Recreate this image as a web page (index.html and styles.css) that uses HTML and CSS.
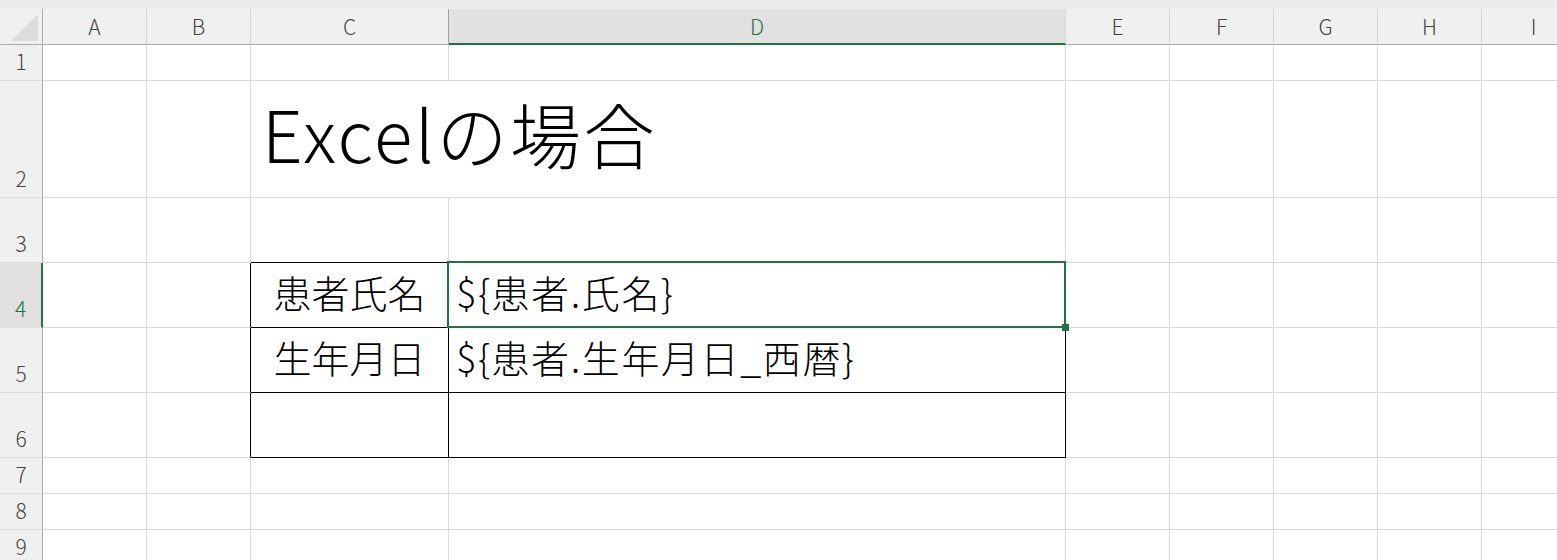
FILE: index.html
```html
<!DOCTYPE html>
<html lang="ja">
<head>
<meta charset="utf-8">
<title>Excelの場合</title>
<link rel="stylesheet" href="styles.css">
</head>
<body>
<div class="app">
  <div class="topstrip"></div>
  <div class="sheet">
    <!-- header row -->
    <div class="corner"><svg width="28" height="28" viewBox="0 0 28 28"><polygon points="27,0 27,27 0,27" fill="#dcdcdc"/></svg></div>
    <div class="ch">A</div>
    <div class="ch">B</div>
    <div class="ch before-sel">C</div>
    <div class="ch sel">D</div>
    <div class="ch">E</div>
    <div class="ch">F</div>
    <div class="ch">G</div>
    <div class="ch">H</div>
    <div class="ch">I</div>

    <!-- row 1 -->
    <div class="rh">1</div>
    <div class="c"></div><div class="c"></div><div class="c"></div><div class="c"></div>
    <div class="c"></div><div class="c"></div><div class="c"></div><div class="c"></div><div class="c"></div>

    <!-- row 2 -->
    <div class="rh">2</div>
    <div class="c"></div><div class="c"></div>
    <div class="c title overflow">Excelの場合</div>
    <div class="c"></div>
    <div class="c"></div><div class="c"></div><div class="c"></div><div class="c"></div><div class="c"></div>

    <!-- row 3 -->
    <div class="rh">3</div>
    <div class="c"></div><div class="c"></div>
    <div class="c bb"></div><div class="c bb"></div>
    <div class="c"></div><div class="c"></div><div class="c"></div><div class="c"></div><div class="c"></div>

    <!-- row 4 -->
    <div class="rh rsel">4</div>
    <div class="c"></div><div class="c br"></div>
    <div class="c tb center">患者氏名</div>
    <div class="c tb left active">${患者.氏名}<span class="handle"></span></div>
    <div class="c"></div><div class="c"></div><div class="c"></div><div class="c"></div><div class="c"></div>

    <!-- row 5 -->
    <div class="rh">5</div>
    <div class="c"></div><div class="c br"></div>
    <div class="c tb center">生年月日</div>
    <div class="c tb left">${患者.生年月日_西暦}</div>
    <div class="c"></div><div class="c"></div><div class="c"></div><div class="c"></div><div class="c"></div>

    <!-- row 6 -->
    <div class="rh">6</div>
    <div class="c"></div><div class="c br"></div>
    <div class="c tb"></div>
    <div class="c tb"></div>
    <div class="c"></div><div class="c"></div><div class="c"></div><div class="c"></div><div class="c"></div>

    <!-- row 7 -->
    <div class="rh">7</div>
    <div class="c"></div><div class="c"></div><div class="c"></div><div class="c"></div>
    <div class="c"></div><div class="c"></div><div class="c"></div><div class="c"></div><div class="c"></div>

    <!-- row 8 -->
    <div class="rh">8</div>
    <div class="c"></div><div class="c"></div><div class="c"></div><div class="c"></div>
    <div class="c"></div><div class="c"></div><div class="c"></div><div class="c"></div><div class="c"></div>

    <!-- row 9 -->
    <div class="rh">9</div>
    <div class="c"></div><div class="c"></div><div class="c"></div><div class="c"></div>
    <div class="c"></div><div class="c"></div><div class="c"></div><div class="c"></div><div class="c"></div>
  </div>
</div>
</body>
</html>
```
FILE: styles.css
```css
html, body {
  margin: 0;
  padding: 0;
  background: #ffffff;
  overflow: hidden;
}

.app {
  width: 1557px;
  height: 560px;
  overflow: hidden;
  font-family: "Noto Sans CJK JP", "Noto Sans", sans-serif;
}

.topstrip {
  height: 9px;
  background: #ebebeb;
}

.sheet {
  display: grid;
  grid-template-columns: 43px 104px 104px 198px 617px 104px 104px 104px 104px 104px;
  grid-template-rows: 36px 36px 117px 65px 65px 65px 65px 36px 36px 36px;
  width: 1586px;
}

.sheet > div {
  box-sizing: border-box;
  min-width: 0;
}

.corner {
  background: #f0f0f0;
  border-right: 1px solid #ababab;
  border-bottom: 1px solid #ababab;
  display: flex;
  align-items: flex-start;
  justify-content: flex-end;
  padding: 5px 3px 0 0;
}

.corner svg {
  display: block;
}

.ch {
  background: #f0f0f0;
  border-right: 1px solid #d6d6d6;
  border-bottom: 1px solid #ababab;
  color: #444444;
  font-size: 21px;
  font-weight: 300;
  display: flex;
  align-items: center;
  justify-content: center;
  line-height: 1;
}

.ch.before-sel {
  border-right-color: #9f9f9f;
}

.ch.sel {
  background: #e1e1e1;
  border-bottom: 2px solid #217346;
  color: #217346;
  padding-top: 1px;
}

.rh {
  background: #f0f0f0;
  border-right: 1px solid #ababab;
  border-bottom: 1px solid #dcdcdc;
  color: #444444;
  font-size: 21px;
  font-weight: 300;
  display: flex;
  align-items: flex-end;
  justify-content: center;
  line-height: 1;
  padding-bottom: 8px;
}

.rh.rsel {
  background: #e1e1e1;
  border-right: 2px solid #217346;
  color: #217346;
}

.c {
  border-right: 1px solid #dadada;
  border-bottom: 1px solid #dadada;
  color: #000000;
  white-space: nowrap;
}

.c.overflow {
  border-right-color: transparent;
  overflow: visible;
  position: relative;
  z-index: 1;
}

.title {
  font-size: 71px;
  font-weight: 300;
  letter-spacing: 2.6px;
  line-height: 1;
  display: flex;
  align-items: flex-end;
  padding: 0 0 29px 11px;
}

.c.bb {
  border-bottom-color: #000000;
}

.c.br {
  border-right-color: #000000;
}

.c.tb {
  border-right-color: #000000;
  border-bottom-color: #000000;
  font-size: 38px;
  font-weight: 300;
  line-height: 1;
  display: flex;
  align-items: center;
  padding-bottom: 7px;
}

.c.center {
  justify-content: center;
}

.c.left {
  justify-content: flex-start;
  padding-left: 7px;
  letter-spacing: 1.6px;
}

.c.active {
  position: relative;
}

.c.active::after {
  content: "";
  position: absolute;
  left: -2px;
  top: -2px;
  right: -1px;
  bottom: -1px;
  border: 2px solid #217346;
  pointer-events: none;
}

.handle {
  position: absolute;
  right: -4px;
  bottom: -4px;
  width: 7px;
  height: 7px;
  background: #217346;
  z-index: 2;
}
```
